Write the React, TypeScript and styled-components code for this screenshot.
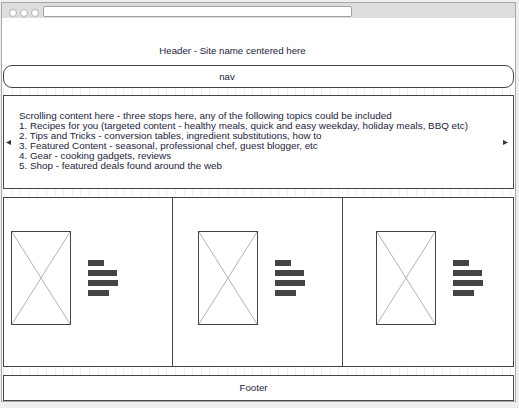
import React from 'react';
import styled, { createGlobalStyle } from 'styled-components';

const lineColor = '#444';
const textColor = '#23233a';

const GlobalStyle = createGlobalStyle`
  html, body {
    margin: 0;
    padding: 0;
    background: #eeeeee;
  }
  body {
    font-family: "Liberation Sans", Arial, sans-serif;
    color: ${textColor};
  }
`;

const Page = styled.div`
  padding: 2px 0 0 1px;
`;

const Window = styled.div`
  width: 513px;
  border: 1px solid #a8a8a8;
  background: #fff;
`;

const TitleBar = styled.div`
  height: 15px;
  background: #dddddd;
  display: flex;
  align-items: flex-end;
  padding: 0 0 1px 7px;
  box-sizing: border-box;
  gap: 3px;
`;

const Dot = styled.span`
  width: 8px;
  height: 8px;
  border-radius: 50%;
  border: 1px solid #b4b4b4;
  background: #fff;
  box-sizing: border-box;
`;

const AddressBar = styled.span`
  width: 309px;
  height: 11px;
  margin-left: 1px;
  border: 1px solid #a0a0a0;
  border-radius: 2px;
  background: #fff;
  box-sizing: border-box;
`;

const Body = styled.div`
  display: flex;
  flex-direction: column;
  padding: 0 1px;
`;

const Header = styled.div`
  height: 47px;
  display: flex;
  align-items: flex-end;
  justify-content: center;
  padding: 0 52px 8px 0;
  box-sizing: border-box;
  font-size: 9.7px;
  line-height: 12px;
`;

const Box = styled.div<{ $h: number; $radius?: number }>`
  height: ${(p) => p.$h}px;
  border: 1px solid ${lineColor};
  border-radius: ${(p) => p.$radius || 0}px;
  box-sizing: border-box;
  background: #fff;
`;

const CenteredBox = styled(Box)<{ $shift: number }>`
  display: flex;
  align-items: center;
  justify-content: center;
  padding-right: ${(p) => p.$shift}px;
  font-size: 9.7px;
  line-height: 12px;
`;

const Gap = styled.div<{ $h: number }>`
  height: ${(p) => p.$h}px;
  background-image: repeating-linear-gradient(
    90deg,
    #eeeeee 0 1px,
    transparent 1px 8.6px
  );
`;

const Carousel = styled(Box)`
  display: flex;
  align-items: center;
  padding: 0 5px 0 2px;
`;

const Arrow = styled.svg`
  width: 5px;
  height: 5px;
  flex: none;
  fill: #333;
`;

const SlideText = styled.div`
  flex: 1;
  margin: 0 0 2px 8px;
  font-size: 9.85px;
  line-height: 10px;
  white-space: nowrap;
`;

const Cards = styled(Box)`
  display: grid;
  grid-template-columns: 168px 170px 1fr;
`;

const Card = styled.div<{ $pad: number; $divider?: boolean }>`
  display: flex;
  align-items: flex-start;
  padding: 33px 0 0 ${(p) => p.$pad}px;
  box-sizing: border-box;
  border-left: ${(p) => (p.$divider ? `1px solid ${lineColor}` : 'none')};
`;

const CardRow = styled.div`
  display: flex;
  align-items: center;
  gap: 17px;
`;

const Placeholder = styled.svg`
  width: 60px;
  height: 94px;
  border: 1px solid ${lineColor};
  box-sizing: border-box;
  display: block;
`;

const Lines = styled.div`
  display: flex;
  flex-direction: column;
  gap: 4px;
`;

const Bar = styled.span<{ $w: number }>`
  display: block;
  width: ${(p) => p.$w}px;
  height: 6px;
  background: ${lineColor};
`;

const topics = [
  'Scrolling content here - three stops here, any of the following topics could be included',
  '1. Recipes for you (targeted content - healthy meals, quick and easy weekday, holiday meals, BBQ etc)',
  '2. Tips and Tricks - conversion tables, ingredient substitutions, how to',
  '3. Featured Content - seasonal, professional chef, guest blogger, etc',
  '4. Gear - cooking gadgets, reviews',
  '5. Shop - featured deals found around the web',
];

const cardPads = [7, 25, 33];

const ImageBox = () => (
  <Placeholder viewBox="0 0 58 92" preserveAspectRatio="none">
    <path d="M0 0L58 92M58 0L0 92" stroke="#b2b2b2" strokeWidth="1" fill="none" />
  </Placeholder>
);

const App = () => (
  <>
    <GlobalStyle />
    <Page>
      <Window>
        <TitleBar>
          <Dot />
          <Dot />
          <Dot />
          <AddressBar />
        </TitleBar>
        <Body>
          <Header>Header - Site name centered here</Header>
          <CenteredBox $h={23} $radius={9} $shift={63}>
            nav
          </CenteredBox>
          <Gap $h={7} />
          <Carousel $h={94}>
            <Arrow viewBox="0 0 5 5">
              <path d="M0 2.5L5 0V5Z" />
            </Arrow>
            <SlideText>
              {topics.map((t) => (
                <div key={t}>{t}</div>
              ))}
            </SlideText>
            <Arrow viewBox="0 0 5 5">
              <path d="M5 2.5L0 0V5Z" />
            </Arrow>
          </Carousel>
          <Gap $h={8} />
          <Cards $h={170}>
            {cardPads.map((pad, i) => (
              <Card key={i} $pad={pad} $divider={i > 0}>
                <CardRow>
                  <ImageBox />
                  <Lines>
                    <Bar $w={16} />
                    <Bar $w={29} />
                    <Bar $w={30} />
                    <Bar $w={21} />
                  </Lines>
                </CardRow>
              </Card>
            ))}
          </Cards>
          <Gap $h={8} />
          <CenteredBox $h={26} $shift={10}>
            Footer
          </CenteredBox>
        </Body>
      </Window>
    </Page>
  </>
);

export default App;
